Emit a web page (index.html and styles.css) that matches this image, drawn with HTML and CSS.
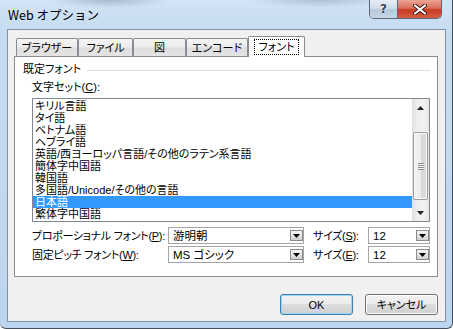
FILE: index.html
```html
<!DOCTYPE html>
<html lang="ja">
<head>
    <meta charset="UTF-8">
    <title>Web オプション</title>
    <link rel="stylesheet" href="styles.css">
</head>
<body>
    <div class="window">
        <div class="titlebar">
            <div class="title">Web オプション</div>
            <div class="caption-buttons">
                <div class="cap-btn help">?</div>
                <div class="cap-btn close">
                    <svg width="14" height="11" viewBox="0 0 14 11">
                        <path d="M2 1.5 L12 9.5 M12 1.5 L2 9.5" stroke="#3a1a14" stroke-width="4" stroke-linecap="round"/>
                        <path d="M2 1.5 L12 9.5 M12 1.5 L2 9.5" stroke="#fff" stroke-width="2.2" stroke-linecap="round"/>
                    </svg>
                </div>
            </div>
        </div>

        <div class="client">
            <div class="tabs">
                <div class="tab w62">ブラウザー</div>
                <div class="tab w55">ファイル</div>
                <div class="tab w53">図</div>
                <div class="tab w62">エンコード</div>
                <div class="tab active w57"><span class="focus">フォント</span></div>
            </div>

            <div class="panel">
                <div class="group-head">
                    <span>既定フォント</span>
                    <div class="rule"></div>
                </div>

                <div class="field-label">文字セット(<u>C</u>):</div>

                <div class="listbox">
                    <div class="items">
                        <div class="item">キリル言語</div>
                        <div class="item">タイ語</div>
                        <div class="item">ベトナム語</div>
                        <div class="item">ヘブライ語</div>
                        <div class="item">英語/西ヨーロッパ言語/その他のラテン系言語</div>
                        <div class="item">簡体字中国語</div>
                        <div class="item">韓国語</div>
                        <div class="item">多国語/Unicode/その他の言語</div>
                        <div class="item selected">日本語</div>
                        <div class="item">繁体字中国語</div>
                    </div>
                    <div class="vscroll">
                        <div class="sb-btn">
                            <svg width="7" height="4" viewBox="0 0 7 4"><path d="M0 4 L3.5 0 L7 4 Z" fill="#222"/></svg>
                        </div>
                        <div class="sb-track">
                            <div class="sb-thumb">
                                <div class="grip"></div>
                            </div>
                        </div>
                        <div class="sb-btn">
                            <svg width="7" height="4" viewBox="0 0 7 4"><path d="M0 0 L7 0 L3.5 4 Z" fill="#222"/></svg>
                        </div>
                    </div>
                </div>

                <div class="font-row">
                    <div class="row-label">プロポーショナル フォント(<u>P</u>):</div>
                    <div class="combo">
                        <span class="combo-text">游明朝</span>
                        <span class="drop"><svg width="7" height="4" viewBox="0 0 7 4"><path d="M0 0 L7 0 L3.5 4 Z" fill="#000"/></svg></span>
                    </div>
                    <div class="size-label">サイズ(<u>S</u>):</div>
                    <div class="combo">
                        <span class="combo-text">12</span>
                        <span class="drop"><svg width="7" height="4" viewBox="0 0 7 4"><path d="M0 0 L7 0 L3.5 4 Z" fill="#000"/></svg></span>
                    </div>
                </div>

                <div class="font-row">
                    <div class="row-label">固定ピッチ フォント(<u>W</u>):</div>
                    <div class="combo">
                        <span class="combo-text">MS ゴシック</span>
                        <span class="drop"><svg width="7" height="4" viewBox="0 0 7 4"><path d="M0 0 L7 0 L3.5 4 Z" fill="#000"/></svg></span>
                    </div>
                    <div class="size-label">サイズ(<u>E</u>):</div>
                    <div class="combo">
                        <span class="combo-text">12</span>
                        <span class="drop"><svg width="7" height="4" viewBox="0 0 7 4"><path d="M0 0 L7 0 L3.5 4 Z" fill="#000"/></svg></span>
                    </div>
                </div>
            </div>

            <div class="actions">
                <div class="btn default">OK</div>
                <div class="btn">キャンセル</div>
            </div>
        </div>
    </div>
</body>
</html>
```

FILE: styles.css
```css
* {
    box-sizing: border-box;
}

body {
    margin: 0;
    width: 453px;
    height: 329px;
    overflow: hidden;
    font-family: "Liberation Sans", "Noto Sans CJK JP", sans-serif;
    font-size: 11px;
    font-feature-settings: "palt";
    color: #000;
    background: #fff;
}

u {
    text-decoration: underline;
    text-underline-offset: 1px;
}

/* window frame */
.window {
    width: 453px;
    height: 329px;
    display: flex;
    flex-direction: column;
    background:
        radial-gradient(ellipse 60px 8px at 110px 0, rgba(90, 110, 130, 0.35), transparent),
        radial-gradient(ellipse 70px 8px at 320px 0, rgba(90, 110, 130, 0.3), transparent),
        linear-gradient(to bottom, #d2e4f5 0, #c6dcf1 29px, #bcd5ee 100%);
    border-right: 1px solid #44505c;
    border-bottom: 1px solid #44505c;
    border-radius: 0 0 6px 6px;
}

.titlebar {
    height: 29px;
    display: flex;
    justify-content: space-between;
    align-items: flex-start;
}

.title {
    padding: 7px 0 0 8px;
    font-family: "Noto Sans CJK JP", sans-serif;
    font-size: 12.5px;
    line-height: 16px;
    font-feature-settings: normal;
}

.caption-buttons {
    display: flex;
    margin-right: 10px;
    border: 1px solid #5b6878;
    border-top: none;
    border-radius: 0 0 5px 5px;
    overflow: hidden;
}

.cap-btn {
    height: 18px;
    display: flex;
    align-items: center;
    justify-content: center;
}

.help {
    width: 28px;
    border-right: 1px solid #5b6878;
    background: linear-gradient(to bottom, #e6edf5 0, #d3dde9 45%, #b9c7d8 55%, #c7d6e6 100%);
    color: #3a4450;
    font-family: "DejaVu Sans", sans-serif;
    font-size: 12px;
    font-weight: bold;
    text-shadow: 0 0 2px #fff;
}

.close {
    width: 43px;
    background: linear-gradient(to bottom, #eba597 0, #da6f57 45%, #c63a22 55%, #d65f43 100%);
}

/* client area */
.client {
    flex: 1;
    margin: 0 6px 6px 7px;
    background: #f0f0f0;
    border: 1px solid #7f93a8;
    display: flex;
    flex-direction: column;
    padding: 6px 6px 0 6px;
}

.tabs {
    display: flex;
    align-items: flex-end;
    height: 21px;
    margin-left: 2px;
    position: relative;
    z-index: 1;
}

.tab {
    height: 18px;
    margin-bottom: 1px;
    border: 1px solid #898c95;
    border-bottom: none;
    border-radius: 2px 2px 0 0;
    background: linear-gradient(to bottom, #f4f4f4 0, #ececec 45%, #dedede 55%, #e4e4e4 100%);
    display: flex;
    align-items: center;
    justify-content: center;
    line-height: 12px;
    padding-top: 1px;
}

.tab.active {
    height: 21px;
    margin-bottom: 0;
    background: #fff;
    padding-top: 0;
}

.focus {
    outline: 1px dotted #000;
    padding: 1px 3px;
    line-height: 12px;
}

.w62 { width: 62px; }
.w55 { width: 55px; }
.w53 { width: 53px; }
.w57 { width: 57px; }

.panel {
    height: 221px;
    margin-top: -1px;
    margin-right: 1px;
    background: #fff;
    border: 1px solid #898c95;
    padding: 6px 7px 0 8px;
}

.group-head {
    display: flex;
    align-items: center;
    height: 12px;
    line-height: 12px;
}

.rule {
    flex: 1;
    height: 1px;
    margin: 2px 0 0 6px;
    background: #d5dfe5;
}

.field-label {
    margin: 6px 0 0 9px;
    line-height: 12px;
}

/* list box */
.listbox {
    margin: 5px 0 0 9px;
    height: 124px;
    border: 1px solid #828790;
    display: flex;
}

.items {
    flex: 1;
    padding-top: 1px;
}

.item {
    height: 12px;
    line-height: 12px;
    padding-left: 2px;
    white-space: nowrap;
}

.item.selected {
    background: #3399ff;
    color: #fff;
}

.vscroll {
    width: 17px;
    display: flex;
    flex-direction: column;
    background: linear-gradient(to right, #e2e2e2 0, #eeeeee 30%, #f2f2f2 70%, #e6e6e6 100%);
}

.sb-btn {
    height: 17px;
    display: flex;
    align-items: center;
    justify-content: center;
}

.sb-track {
    flex: 1;
    padding: 16px 0 3px 0;
}

.sb-thumb {
    height: 68px;
    margin: 0 1px;
    border: 1px solid #9a9a9a;
    border-radius: 2px;
    background: linear-gradient(to right, #f4f4f4 0, #ebebeb 50%, #d8d8d8 51%, #dcdcdc 100%);
    box-shadow: inset 0 0 0 1px #fbfbfb;
    display: flex;
    align-items: center;
    justify-content: center;
}

.grip {
    width: 6px;
    height: 7px;
    background: repeating-linear-gradient(to bottom, #8c8c8c 0, #8c8c8c 1px, #f5f5f5 1px, #f5f5f5 2px);
}

/* font rows */
.font-row {
    display: grid;
    grid-template-columns: 136px 136px 64px 62px;
    align-items: center;
    margin-left: 9px;
    margin-top: 5px;
    height: 17px;
}

.font-row + .font-row {
    margin-top: 2px;
}

.row-label {
    line-height: 12px;
    white-space: nowrap;
    letter-spacing: -0.3px;
}

.size-label {
    padding-left: 9px;
    line-height: 12px;
    letter-spacing: -0.3px;
}

.combo {
    height: 17px;
    border: 1px solid #a5a5a5;
    background: #fff;
    display: flex;
    align-items: center;
    justify-content: space-between;
    padding: 0 0 0 4px;
}

.combo-text {
    line-height: 12px;
    font-size: 11.5px;
}

.drop {
    width: 13px;
    height: 11px;
    border: 1px solid #8a8a8a;
    background: linear-gradient(to bottom, #f6f6f6 0, #e4e4e4 50%, #d0d0d0 100%);
    display: flex;
    align-items: center;
    justify-content: center;
}

/* dialog buttons */
.actions {
    display: flex;
    justify-content: flex-end;
    gap: 12px;
    margin: 17px 1px 0 0;
}

.btn {
    width: 73px;
    height: 21px;
    border: 1px solid #707070;
    border-radius: 3px;
    background: linear-gradient(to bottom, #f2f2f2 0, #ebebeb 50%, #dddddd 50%, #cfcfcf 100%);
    box-shadow: inset 0 0 0 1px #fcfcfc;
    display: flex;
    align-items: center;
    justify-content: center;
    line-height: 12px;
}

.btn.default {
    border-color: #3c7fb1;
    box-shadow: inset 0 0 0 1px #9fd3f2;
}
```
